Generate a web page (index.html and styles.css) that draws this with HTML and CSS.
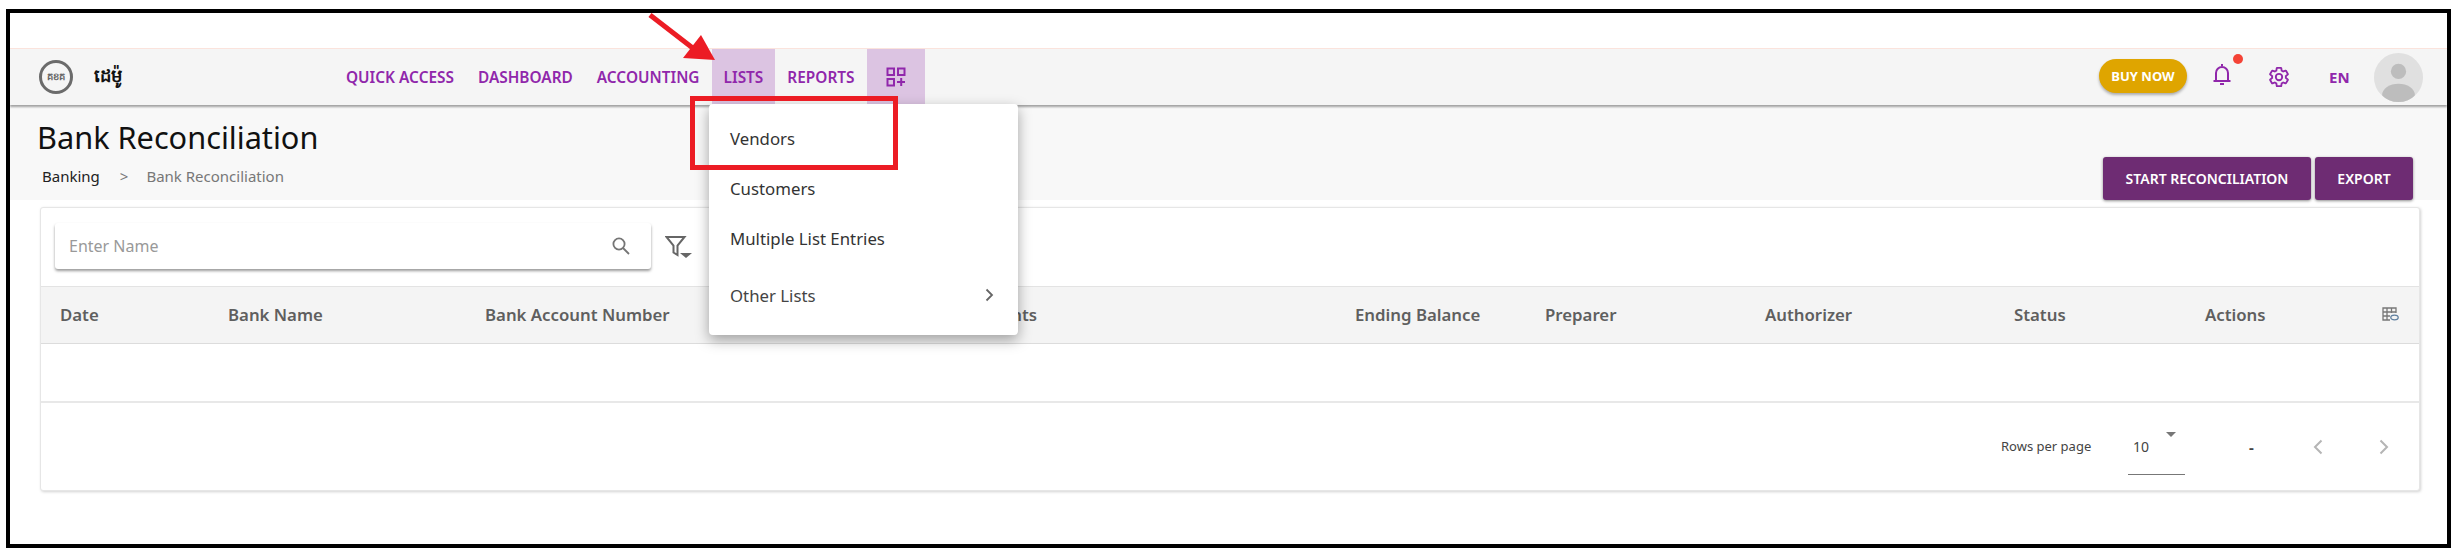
FILE: index.html
```html
<!DOCTYPE html>
<html lang="en">
<head>
<meta charset="utf-8">
<title>Bank Reconciliation</title>
<link rel="stylesheet" href="styles.css">
</head>
<body>
<div class="frame">
  <header class="nav">
    <div class="brand">
      <div class="logo"><span class="logo-text">គខគ</span></div>
      <span class="brand-name">ដេម៉ូ</span>
    </div>
    <nav class="menu">
      <a class="menu-item">QUICK ACCESS</a>
      <a class="menu-item">DASHBOARD</a>
      <a class="menu-item">ACCOUNTING</a>
      <a class="menu-item active">LISTS</a>
      <a class="menu-item">REPORTS</a>
      <a class="menu-item active add">
        <svg width="20" height="20" viewBox="0 0 20 20" fill="none" stroke="#9027ab" stroke-width="2"><rect x="1.500" y="1.500" width="6.500" height="6.500"/><rect x="12" y="1.500" width="6.500" height="6.500"/><rect x="1.500" y="12" width="6.500" height="6.500"/><path d="M15.200 11v8M11 15h8"/></svg>
      </a>
    </nav>
    <div class="nav-right">
      <button class="buy">BUY NOW</button>
      <span class="bell">
        <svg width="20" height="24" viewBox="0 0 20 24" fill="none" stroke="#9027ab" stroke-width="2"><path d="M10 2v2M4 18v-7a6 6 0 0 1 12 0v7M1.500 19h17M8 22h4"/></svg>
        <i class="dot"></i>
      </span>
      <svg class="gear" width="22" height="22" viewBox="0 0 24 24" fill="none" stroke="#9027ab" stroke-width="2"><path d="M19.430 12.980c.04-.32.07-.64.07-.98 0-.34-.03-.66-.07-.98l2.110-1.650c.19-.15.24-.42.12-.64l-2-3.460c-.09-.16-.26-.25-.44-.25-.06 0-.12.01-.17.03l-2.490 1c-.52-.4-1.080-.73-1.690-.98l-.38-2.650C14.460 2.180 14.250 2 14 2h-4c-.25 0-.46.18-.49.42l-.38 2.650c-.61.25-1.170.59-1.690.98l-2.490-1c-.06-.02-.12-.03-.18-.03-.17 0-.34.09-.43.25l-2 3.460c-.13.22-.07.49.12.64l2.110 1.650c-.04.32-.07.65-.07.98 0 .33.03.66.07.98l-2.110 1.650c-.19.15-.24.42-.12.64l2 3.460c.09.16.26.25.44.25.06 0 .12-.01.17-.03l2.490-1c.52.4 1.080.73 1.690.98l.38 2.650c.03.24.24.42.49.42h4c.25 0 .46-.18.49-.42l.38-2.650c.61-.25 1.170-.59 1.690-.98l2.490 1c.06.02.12.03.18.03.17 0 .34-.09.43-.25l2-3.460c.12-.22.07-.49-.12-.64l-2.110-1.650z"/><circle cx="12" cy="12" r="3.500"/></svg>
      <span class="lang">EN</span>
      <svg class="avatar" width="49" height="49" viewBox="0 0 48 48"><defs><clipPath id="av"><circle cx="24" cy="24" r="24"/></clipPath></defs><g clip-path="url(#av)"><rect width="48" height="48" fill="#e0e0e0"/><circle cx="24" cy="18" r="7.500" fill="#bdbdbd"/><ellipse cx="24" cy="41" rx="16" ry="11" fill="#bdbdbd"/></g></svg>
    </div>
  </header>

  <section class="head">
    <div class="head-left">
      <h1 class="title">Bank Reconciliation</h1>
      <div class="crumbs"><span class="crumb-root">Banking</span><span class="crumb-sep">&gt;</span><span class="crumb-leaf">Bank Reconciliation</span></div>
    </div>
    <div class="actions">
      <button class="btn btn-start">START RECONCILIATION</button>
      <button class="btn btn-export">EXPORT</button>
    </div>
  </section>

  <section class="card">
    <div class="toolbar">
      <div class="search">
        <span class="placeholder">Enter Name</span>
        <svg width="20" height="20" viewBox="0 0 20 20" fill="none" stroke="#757575" stroke-width="1.800"><circle cx="8" cy="8" r="5.600"/><path d="M12 12l6 6"/></svg>
      </div>
      <svg class="filter" width="28" height="24" viewBox="0 0 28 24"><path d="M1.500 2h18l-7 8.500V20l-4-2.500v-7z" fill="none" stroke="#666" stroke-width="2"/><path d="M15 18h12l-6 5z" fill="#666"/></svg>
    </div>
    <div class="thead">
      <span>Date</span><span>Bank Name</span><span>Bank Account Number</span><span>Adjustments</span><span>Ending Balance</span><span>Preparer</span><span>Authorizer</span><span>Status</span><span>Actions</span>
      <svg width="17" height="14" viewBox="0 0 17 14" fill="none" stroke="#777" stroke-width="1.300"><path d="M8 13H1V1h13v5M1 5h13M1 9h7M5 1v12M9.500 1v5"/><ellipse cx="12.500" cy="10.500" rx="3.700" ry="2.300" stroke="#5f7f9f"/></svg>
    </div>
    <div class="empty-row"></div>
    <div class="pager">
      <span class="rows-label">Rows per page</span>
      <div class="rows-select"><span>10</span><i class="caret"></i></div>
      <span class="range">-</span>
      <svg class="page-prev" width="10" height="16" viewBox="0 0 10 16" fill="none" stroke="#b5b5b5" stroke-width="2"><path d="M8.500 1.500L2 8l6.500 6.500"/></svg>
      <svg class="page-next" width="10" height="16" viewBox="0 0 10 16" fill="none" stroke="#b5b5b5" stroke-width="2"><path d="M1.500 1.500L8 8l-6.500 6.500"/></svg>
    </div>
  </section>

  <div class="dropdown">
    <div class="dd-item dd-vendors">Vendors</div>
    <div class="dd-item dd-customers">Customers</div>
    <div class="dd-item dd-multi">Multiple List Entries</div>
    <div class="dd-item dd-other"><span>Other Lists</span>
      <svg width="9" height="14" viewBox="0 0 9 14" fill="none" stroke="#666" stroke-width="1.800"><path d="M1.500 1.500L7 7l-5.500 5.500"/></svg>
    </div>
  </div>
  <div class="callout-box"></div>
  <svg class="callout-arrow" width="80" height="56" viewBox="0 0 80 56"><path d="M4 2L48 36" stroke="#ec1c24" stroke-width="5" fill="none"/><path d="M37 45L55 22L69 47z" fill="#ec1c24"/></svg>
</div>
</body>
</html>
```
FILE: styles.css
```css
* { box-sizing: border-box; }
html, body { margin: 0; padding: 0; background: #fff; }
body { font-family: "Noto Sans", "Open Sans", sans-serif; color: #222; height: 556px; overflow: hidden; }

.frame {
  position: relative;
  margin: 9px 0 0 6px;
  width: 2445px;
  height: 539px;
  border: 4px solid #000;
  padding-top: 35px;
  background: #fff;
}

.nav {
  display: flex;
  align-items: stretch;
  height: 57px;
  background: #f5f5f5;
  border-top: 1px solid #fbe3dc;
  box-shadow: 0 2px 2px rgba(0, 0, 0, .35);
  position: relative;
  padding-left: 29px;
}
.brand { display: flex; align-items: center; width: 295px; }
.logo {
  width: 34px; height: 34px;
  border: 3px solid #6b6b6b;
  border-radius: 50%;
  display: flex; align-items: center; justify-content: center;
  margin-right: 21px;
}
.logo-text { font: 700 10px "Noto Sans", sans-serif; color: #666; }
.brand-name { font: 700 18px "Noto Sans", sans-serif; color: #111; }

.menu { display: flex; align-items: stretch; }
.menu-item {
  display: flex; align-items: center;
  padding: 0 12px;
  font-size: 15.400px; font-weight: 600;
  color: #9027ab;
  white-space: nowrap;
}
.menu-item.active { background: #dcc4e2; }
.menu-item.add { padding: 0 19px; }

.nav-right { margin-left: auto; display: flex; align-items: center; width: 348px; }
.buy {
  width: 88px; height: 34px;
  border: 0; border-radius: 17px;
  background: #dfa500; color: #fff;
  font: 700 13px "Noto Sans", sans-serif;
  box-shadow: 0 2px 3px rgba(0,0,0,.3);
  margin-top: -3px;
}
.bell { position: relative; display: block; margin-left: 25px; margin-top: -6px; height: 24px; }
.dot { position: absolute; left: 21px; top: -8px; width: 10px; height: 10px; border-radius: 50%; background: #f44336; }
.gear { margin-left: 36px; margin-top: -1px; }
.lang { margin-left: 39px; font-size: 15px; font-weight: 700; color: #9027ab; }
.avatar { margin-left: 24px; }

.head {
  display: flex;
  justify-content: space-between;
  height: 95px;
  background: #f8f8f8;
  padding: 0 34px 0 27px;
}
.title { margin: 10px 0 0; font-size: 30.700px; font-weight: 400; line-height: 44px; color: #111; }
.crumbs { display: flex; align-items: center; margin: 7px 0 0 5px; font-size: 15px; line-height: 20px; }
.crumb-root { color: #222; }
.crumb-sep { margin: 0 18px 0 20px; color: #777; }
.crumb-leaf { color: #777; }
.actions { align-self: flex-end; display: flex; gap: 4px; }
.btn {
  height: 43px;
  border: 0; border-radius: 3px;
  background: #6e2c73; color: #fff;
  font: 600 14px "Noto Sans", sans-serif;
  box-shadow: 0 1px 3px rgba(0,0,0,.45);
}
.btn-start { width: 208px; }
.btn-export { width: 98px; }

.card {
  margin: 7px 27px 0 30px;
  height: 284px;
  background: #fff;
  border: 1px solid #e6e6e6;
  border-radius: 3px;
  box-shadow: 1px 1px 3px rgba(0,0,0,.18);
}
.toolbar { display: flex; align-items: flex-start; height: 78px; padding: 15px 0 0 14px; }
.search {
  width: 596px; height: 46px;
  display: flex; align-items: center; justify-content: space-between;
  padding: 0 20px 0 14px;
  background: #fff;
  border-radius: 3px;
  box-shadow: 0 2px 3px rgba(0,0,0,.4);
}
.placeholder { font-size: 16px; color: #999; }
.filter { margin: 12px 0 0 14px; }

.thead {
  display: grid;
  grid-template-columns: 168px 257px 448px 422px 190px 220px 249px 191px 177px 1fr;
  align-items: center;
  height: 58px;
  padding: 0 0 2px 19px;
  background: #f4f4f4;
  border-top: 1px solid #e3e3e3;
  border-bottom: 1px solid #dcdcdc;
  font-size: 16.800px; font-weight: 600; color: #5f5f5f;
}
.empty-row { height: 59px; border-bottom: 2px solid #e8e8e8; }
.pager { display: flex; align-items: center; height: 87px; padding-left: 1960px; }
.rows-label { font-size: 13px; color: #444; width: 132px; margin-top: -2px; }
.rows-select {
  width: 57px; height: 57px;
  display: flex; align-items: center;
  padding-left: 5px;
  border-bottom: 1px solid #777;
  font-size: 14px; color: #444;
  position: relative;
  margin-left: -5px;
}
.caret {
  position: absolute; left: 38px; top: 14px;
  width: 0; height: 0;
  border-left: 5px solid transparent; border-right: 5px solid transparent;
  border-top: 5px solid #777;
}
.range { margin-left: 64px; font-size: 15px; font-weight: 700; color: #444; }
.page-prev { margin-left: 59px; }
.page-next { margin-left: 56px; }

.dropdown {
  position: absolute;
  left: 699px; top: 91px;
  width: 309px; height: 231px;
  background: #fff;
  border-radius: 4px;
  box-shadow: 0 5px 14px rgba(0,0,0,.35);
  padding-left: 21px;
  padding-right: 24px;
  font-size: 16.800px;
  color: #333;
}
.dd-item { display: flex; justify-content: space-between; align-items: center; height: 50px; }
.dd-vendors { margin-top: 9px; }
.dd-other { margin-top: 1px; height: 62px; color: #444; }
.callout-box {
  position: absolute;
  left: 680px; top: 83px;
  width: 208px; height: 74px;
  border: 5px solid #ec1c24;
}
.callout-arrow { position: absolute; left: 636px; top: 0; }
```
